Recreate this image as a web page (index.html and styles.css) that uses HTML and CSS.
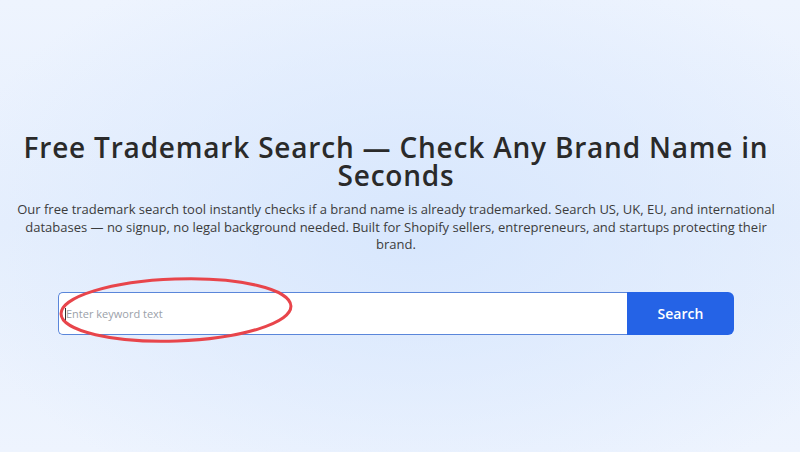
FILE: index.html
```html
<!DOCTYPE html>
<html lang="en">
<head>
<meta charset="utf-8">
<title>Free Trademark Search</title>
<link rel="stylesheet" href="styles.css">
</head>
<body>
<main class="page">
  <section class="hero">
    <h1 class="title">Free Trademark Search — Check Any Brand Name in Seconds</h1>
    <p class="lead">Our free trademark search tool instantly checks if a brand name is already trademarked. Search US, UK, EU, and international databases — no signup, no legal background needed. Built for Shopify sellers, entrepreneurs, and startups protecting their brand.</p>
    <form class="search" onsubmit="return false">
      <div class="field">
        <span class="caret"></span>
        <input class="input" type="text" placeholder="Enter keyword text">
        <svg class="mark" width="250" height="80" viewBox="0 0 250 80" aria-hidden="true">
          <ellipse cx="125" cy="40" rx="115" ry="31" fill="none" stroke="#e8454b" stroke-width="3" transform="rotate(-2 125 40)"/>
        </svg>
      </div>
      <button class="btn" type="submit">Search</button>
    </form>
  </section>
</main>
</body>
</html>
```

FILE: styles.css
```css
html, body {
  margin: 0;
  padding: 0;
  height: 100%;
}
body {
  font-family: "Open Sans", "Liberation Sans", sans-serif;
  background:
    radial-gradient(ellipse 480px 300px at 420px 230px, #d8e7fd 0%, rgba(216,231,253,0) 100%),
    linear-gradient(180deg, #eef4fe 0%, #e6effd 50%, #eef4fe 100%);
  color: #2b2b2b;
  overflow: hidden;
}
.page {
  width: 792px;
  padding-top: 133px;
}
.hero {
  display: flex;
  flex-direction: column;
  align-items: center;
}
.title {
  margin: 0;
  width: 784px;
  text-align: center;
  font-size: 28px;
  line-height: 28px;
  font-weight: 600;
  color: #2a2a2a;
  letter-spacing: 0.8px;
}
.lead {
  margin: 12px 0 0;
  width: 770px;
  text-align: center;
  font-size: 13px;
  line-height: 17.5px;
  color: #3c3c3c;
}
.search {
  margin-top: 38px;
  display: flex;
  width: 676px;
  height: 43px;
}
.field {
  position: relative;
  flex: 1;
  display: flex;
  align-items: center;
  background: #fff;
  border: 1px solid #5a86da;
  border-right: none;
  border-radius: 5px 0 0 5px;
}
.input {
  flex: 1;
  border: none;
  outline: none;
  background: transparent;
  padding: 0 0 0 7px;
  font-family: inherit;
  font-size: 11px;
  color: #333;
}
.input::placeholder {
  color: #9ba1a9;
}
.caret {
  position: absolute;
  left: 6px;
  top: 15px;
  width: 1px;
  height: 13px;
  background: #333;
}
.mark {
  position: absolute;
  left: -8px;
  top: -23px;
  pointer-events: none;
}
.btn {
  width: 107px;
  border: none;
  border-radius: 0 6px 6px 0;
  background: #2563e6;
  color: #fff;
  font-family: inherit;
  font-size: 14px;
  font-weight: 600;
  cursor: pointer;
}
```
